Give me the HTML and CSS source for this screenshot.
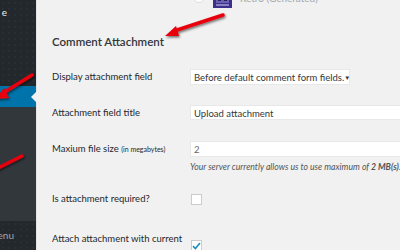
FILE: index.html
```html
<!DOCTYPE html>
<html lang="en">
<head>
    <meta charset="UTF-8">
    <meta name="viewport" content="width=device-width, initial-scale=1.0">
    <title>Comment Attachment Settings</title>
    <link rel="stylesheet" href="styles.css">
</head>
<body>
    <div class="admin">
        <div class="sidebar">
            <div class="menu-top"><span class="menu-text">e</span></div>
            <div class="menu-current"><span class="pointer"></span></div>
            <div class="submenu"></div>
            <div class="collapse"><span class="menu-text">Collapse menu</span></div>
        </div>

        <div class="content">
            <div class="avatar-option">
                <span class="radio"></span>
                <svg class="retro" width="19" height="12" viewBox="0 0 19 12">
                    <rect x="0" y="0" width="19" height="12" fill="#3d2f8c"/>
                    <rect x="3" y="1" width="13" height="6" fill="#6b5fb0"/>
                    <rect x="5" y="3" width="3" height="2" fill="#2b2160"/>
                    <rect x="11" y="3" width="3" height="2" fill="#2b2160"/>
                    <rect x="3" y="8" width="13" height="2" fill="#8a80c4"/>
                </svg>
                <span class="avatar-label">Retro (Generated)</span>
            </div>

            <h2 class="section-title">Comment Attachment</h2>

            <div class="field field-display">
                <label class="field-label">Display attachment field</label>
                <div class="select">Before default comment form fields.<span class="caret">▼</span></div>
            </div>

            <div class="field field-title">
                <label class="field-label">Attachment field title</label>
                <div class="text-input">Upload attachment</div>
            </div>

            <div class="field field-size">
                <label class="field-label">Maxium file size <small>(in megabytes)</small></label>
                <div class="control">
                    <div class="text-input size-input">2</div>
                    <p class="description">Your server currently allows us to use maximum of <b>2 MB(s)</b>.</p>
                </div>
            </div>

            <div class="field field-required">
                <label class="field-label">Is attachment required?</label>
                <span class="checkbox"></span>
            </div>

            <div class="field field-mail">
                <label class="field-label">Attach attachment with current mail?</label>
                <span class="checkbox checked">
                    <svg width="9" height="8" viewBox="0 0 9 8"><path d="M1 4.2 L3.4 6.5 L8 1" fill="none" stroke="#1e8cbe" stroke-width="1.6"/></svg>
                </span>
            </div>
        </div>

        <!-- red callout arrows drawn over the screenshot -->
        <svg class="arrows" width="400" height="250" viewBox="0 0 400 250">
            <defs>
                <filter id="shade" x="-20%" y="-20%" width="140%" height="140%">
                    <feDropShadow dx="1" dy="1.5" stdDeviation="0.8" flood-color="#000" flood-opacity="0.55"/>
                </filter>
            </defs>
            <g filter="url(#shade)" fill="#e8000b" stroke="#e8000b" stroke-linecap="round">
                <line x1="223" y1="15" x2="174" y2="31" stroke-width="3.5"/>
                <polygon points="165,36 176,26 179,36" stroke="none"/>
                <line x1="32" y1="75" x2="3" y2="93" stroke-width="3.5"/>
                <polygon points="-5,99 4,88 9,98" stroke="none"/>
                <line x1="22" y1="156" x2="-2" y2="168" stroke-width="3.5"/>
            </g>
        </svg>
    </div>
</body>
</html>
```

FILE: styles.css
```css
body {
    margin: 0;
    font-family: Lato, "Liberation Sans", Arial, sans-serif;
    background-color: #f1f1f1;
    color: #23282d;
}
.admin {
    position: relative;
    display: flex;
    width: 400px;
    height: 250px;
    overflow: hidden;
}
.sidebar {
    width: 36px;
    flex-shrink: 0;
    display: flex;
    flex-direction: column;
    background-color: #32373c;
    border-right: 1px solid #e5e5e5;
}
.menu-top {
    height: 86px;
    background-color: #23282d;
    background-image: radial-gradient(#2e3640 0.6px, transparent 0.8px);
    background-size: 6px 6px;
}
.menu-text {
    display: block;
    padding-top: 6px;
    font-size: 10px;
    color: #eee;
    white-space: nowrap;
    direction: rtl;
    overflow: hidden;
    width: 7px;
}
.menu-current {
    position: relative;
    height: 21px;
    background-color: #0073aa;
}
.pointer {
    position: absolute;
    right: -1px;
    top: 5px;
    border: 6px solid transparent;
    border-right-color: #f1f1f1;
}
.submenu {
    height: 114px;
    background-color: #32373c;
}
.collapse {
    flex: 1;
    background-color: #23282d;
    background-image: radial-gradient(#2e3640 0.6px, transparent 0.8px);
    background-size: 6px 6px;
}
.collapse .menu-text {
    width: 14px;
    padding-top: 8px;
    color: #a0a5aa;
}
.content {
    flex: 1;
    padding-left: 15px;
}
.avatar-option {
    display: flex;
    align-items: flex-end;
    gap: 8px;
    height: 8px;
    margin-left: 141px;
}
.radio {
    width: 10px;
    height: 10px;
    margin-bottom: 5px;
    border-radius: 50%;
    background: #fff;
    border: 1px solid #ddd;
}
.avatar-label {
    font-size: 10px;
    color: #a0a5aa;
    line-height: 10px;
    margin-bottom: 5px;
}
.section-title {
    margin: 26px 0 0;
    font-size: 11.5px;
    font-weight: 600;
    line-height: 16px;
    color: #32373c;
}
.field {
    display: flex;
    align-items: flex-start;
}
.field-label {
    width: 136px;
    margin-right: 2px;
    flex-shrink: 0;
    font-size: 9.5px;
    line-height: 16px;
    color: #23282d;
}
.field-label small {
    font-size: 7px;
}
.field-display {
    margin-top: 19px;
}
.field-title {
    margin-top: 20px;
}
.field-size {
    margin-top: 20px;
}
.field-required {
    margin-top: 19px;
}
.field-mail {
    margin-top: 24px;
}
.select {
    width: 160px;
    height: 16px;
    padding-left: 3px;
    background: #fff;
    font-size: 9.5px;
    line-height: 16px;
    color: #32373c;
    border: 1px solid #e8e8e8;
    box-sizing: border-box;
    display: flex;
    justify-content: space-between;
    white-space: nowrap;
}
.caret {
    font-size: 6px;
    padding-right: 4px;
    color: #333;
}
.text-input {
    width: 230px;
    height: 15px;
    padding-left: 3px;
    background: #fff;
    font-size: 9.5px;
    line-height: 15px;
    color: #32373c;
    border: 1px solid #e8e8e8;
    box-sizing: border-box;
}
.size-input {
    height: 16px;
    line-height: 16px;
    color: #666;
}
.description {
    margin: 4px 0 0;
    font-size: 8.7px;
    font-style: italic;
    color: #555;
    white-space: nowrap;
}
.checkbox {
    width: 11px;
    height: 11px;
    margin-top: 3px;
    margin-left: 1px;
    background: #fff;
    border: 1px solid #ccc;
    box-sizing: border-box;
    display: flex;
    align-items: center;
    justify-content: center;
}
.checked {
    margin-top: 9px;
}
.arrows {
    position: absolute;
    top: 0;
    left: 0;
    pointer-events: none;
}
```
